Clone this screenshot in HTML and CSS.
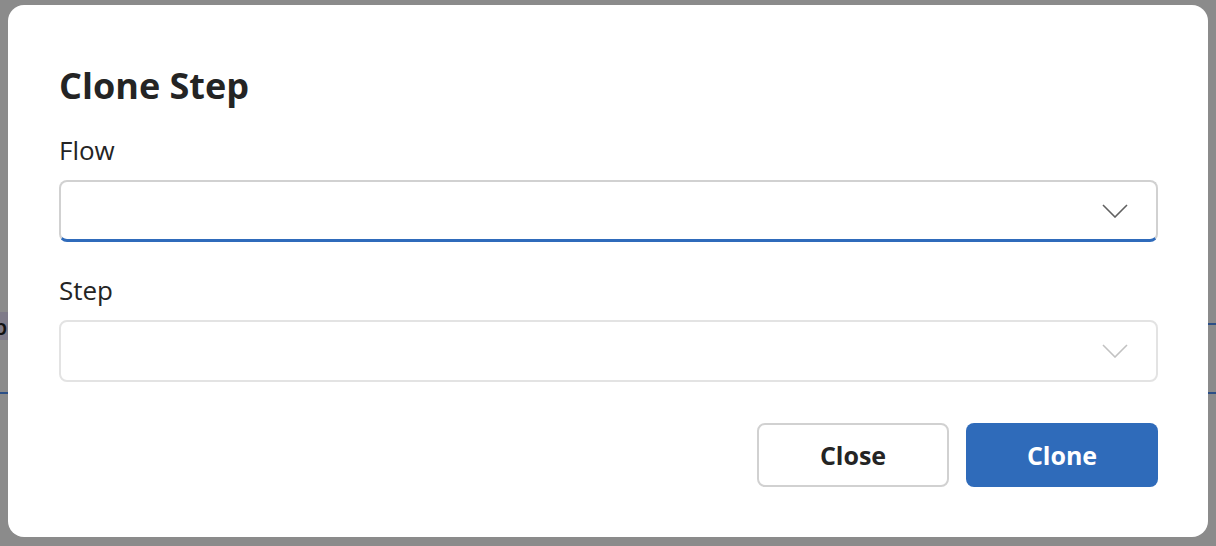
FILE: index.html
```html
<!DOCTYPE html>
<html lang="en">
<head>
  <meta charset="UTF-8" />
  <title>Clone Step</title>
  <link rel="stylesheet" href="styles.css">
</head>
<body>

<!-- page behind the dialog -->
<div class="page">
  <div class="page-row">
    <span class="chip">Step</span>
  </div>
</div>

<div class="dialog">
  <h1 class="dialog-title">Clone Step</h1>

  <label class="field-label">Flow</label>
  <div class="select select-active">
    <svg class="chevron" width="26" height="14" viewBox="0 0 26 14">
      <path d="M1 1 L13 13 L25 1" fill="none" stroke="currentColor" stroke-width="1.6"/>
    </svg>
  </div>

  <label class="field-label field-gap">Step</label>
  <div class="select select-disabled">
    <svg class="chevron" width="26" height="14" viewBox="0 0 26 14">
      <path d="M1 1 L13 13 L25 1" fill="none" stroke="currentColor" stroke-width="1.6"/>
    </svg>
  </div>

  <div class="actions">
    <button class="btn btn-secondary">Close</button>
    <button class="btn btn-primary">Clone</button>
  </div>
</div>

</body>
</html>
```

FILE: styles.css
```css
html, body {
  margin: 0;
  padding: 0;
  height: 100%;
  background: #8b8b8b;
  font-family: "Open Sans", "Noto Sans", sans-serif;
  color: #242424;
  overflow: hidden;
}

.page {
  padding-top: 312px;
}

.page-row {
  position: relative;
  height: 80px;
  border-bottom: 2px solid #2c4f86;
}

.page-row::before {
  content: "";
  position: absolute;
  left: 200px;
  right: 0;
  top: 11px;
  border-top: 2px solid #2c4f86;
}

.chip {
  display: inline-block;
  height: 28px;
  line-height: 28px;
  padding: 0 8px 0 0;
  margin-left: -40px;
  background: #7f7b89;
  color: #111;
  font-size: 22px;
  font-weight: 600;
}

.dialog {
  position: absolute;
  left: 8px;
  top: 5px;
  width: 1200px;
  box-sizing: border-box;
  padding: 59px 50px 50px 51px;
  background: #fff;
  border-radius: 16px;
}

.dialog-title {
  margin: 0;
  font-size: 36px;
  line-height: 44px;
  font-weight: 700;
}

.field-label {
  display: block;
  margin-top: 26px;
  font-size: 26px;
  line-height: 32px;
  font-weight: 400;
}

.field-label.field-gap {
  margin-top: 32px;
}

.select {
  margin-top: 14px;
  height: 62px;
  box-sizing: border-box;
  border: 2px solid #d1d1d1;
  border-radius: 8px;
  display: flex;
  align-items: center;
  justify-content: flex-end;
  padding-right: 28px;
}

.select-active {
  border-bottom: 3px solid #2f6bbb;
  color: #616161;
}

.select-disabled {
  border-color: #e3e3e3;
  color: #c2c2c2;
}

.chevron {
  display: block;
}

.actions {
  margin-top: 41px;
  display: flex;
  justify-content: flex-end;
  gap: 17px;
}

.btn {
  width: 192px;
  height: 64px;
  box-sizing: border-box;
  border-radius: 8px;
  font-family: "Open Sans", "Noto Sans", sans-serif;
  font-size: 25px;
  font-weight: 700;
  cursor: pointer;
}

.btn-secondary {
  background: #fff;
  border: 2px solid #d1d1d1;
  color: #242424;
}

.btn-primary {
  background: #2f6bba;
  border: none;
  color: #fff;
}
```
